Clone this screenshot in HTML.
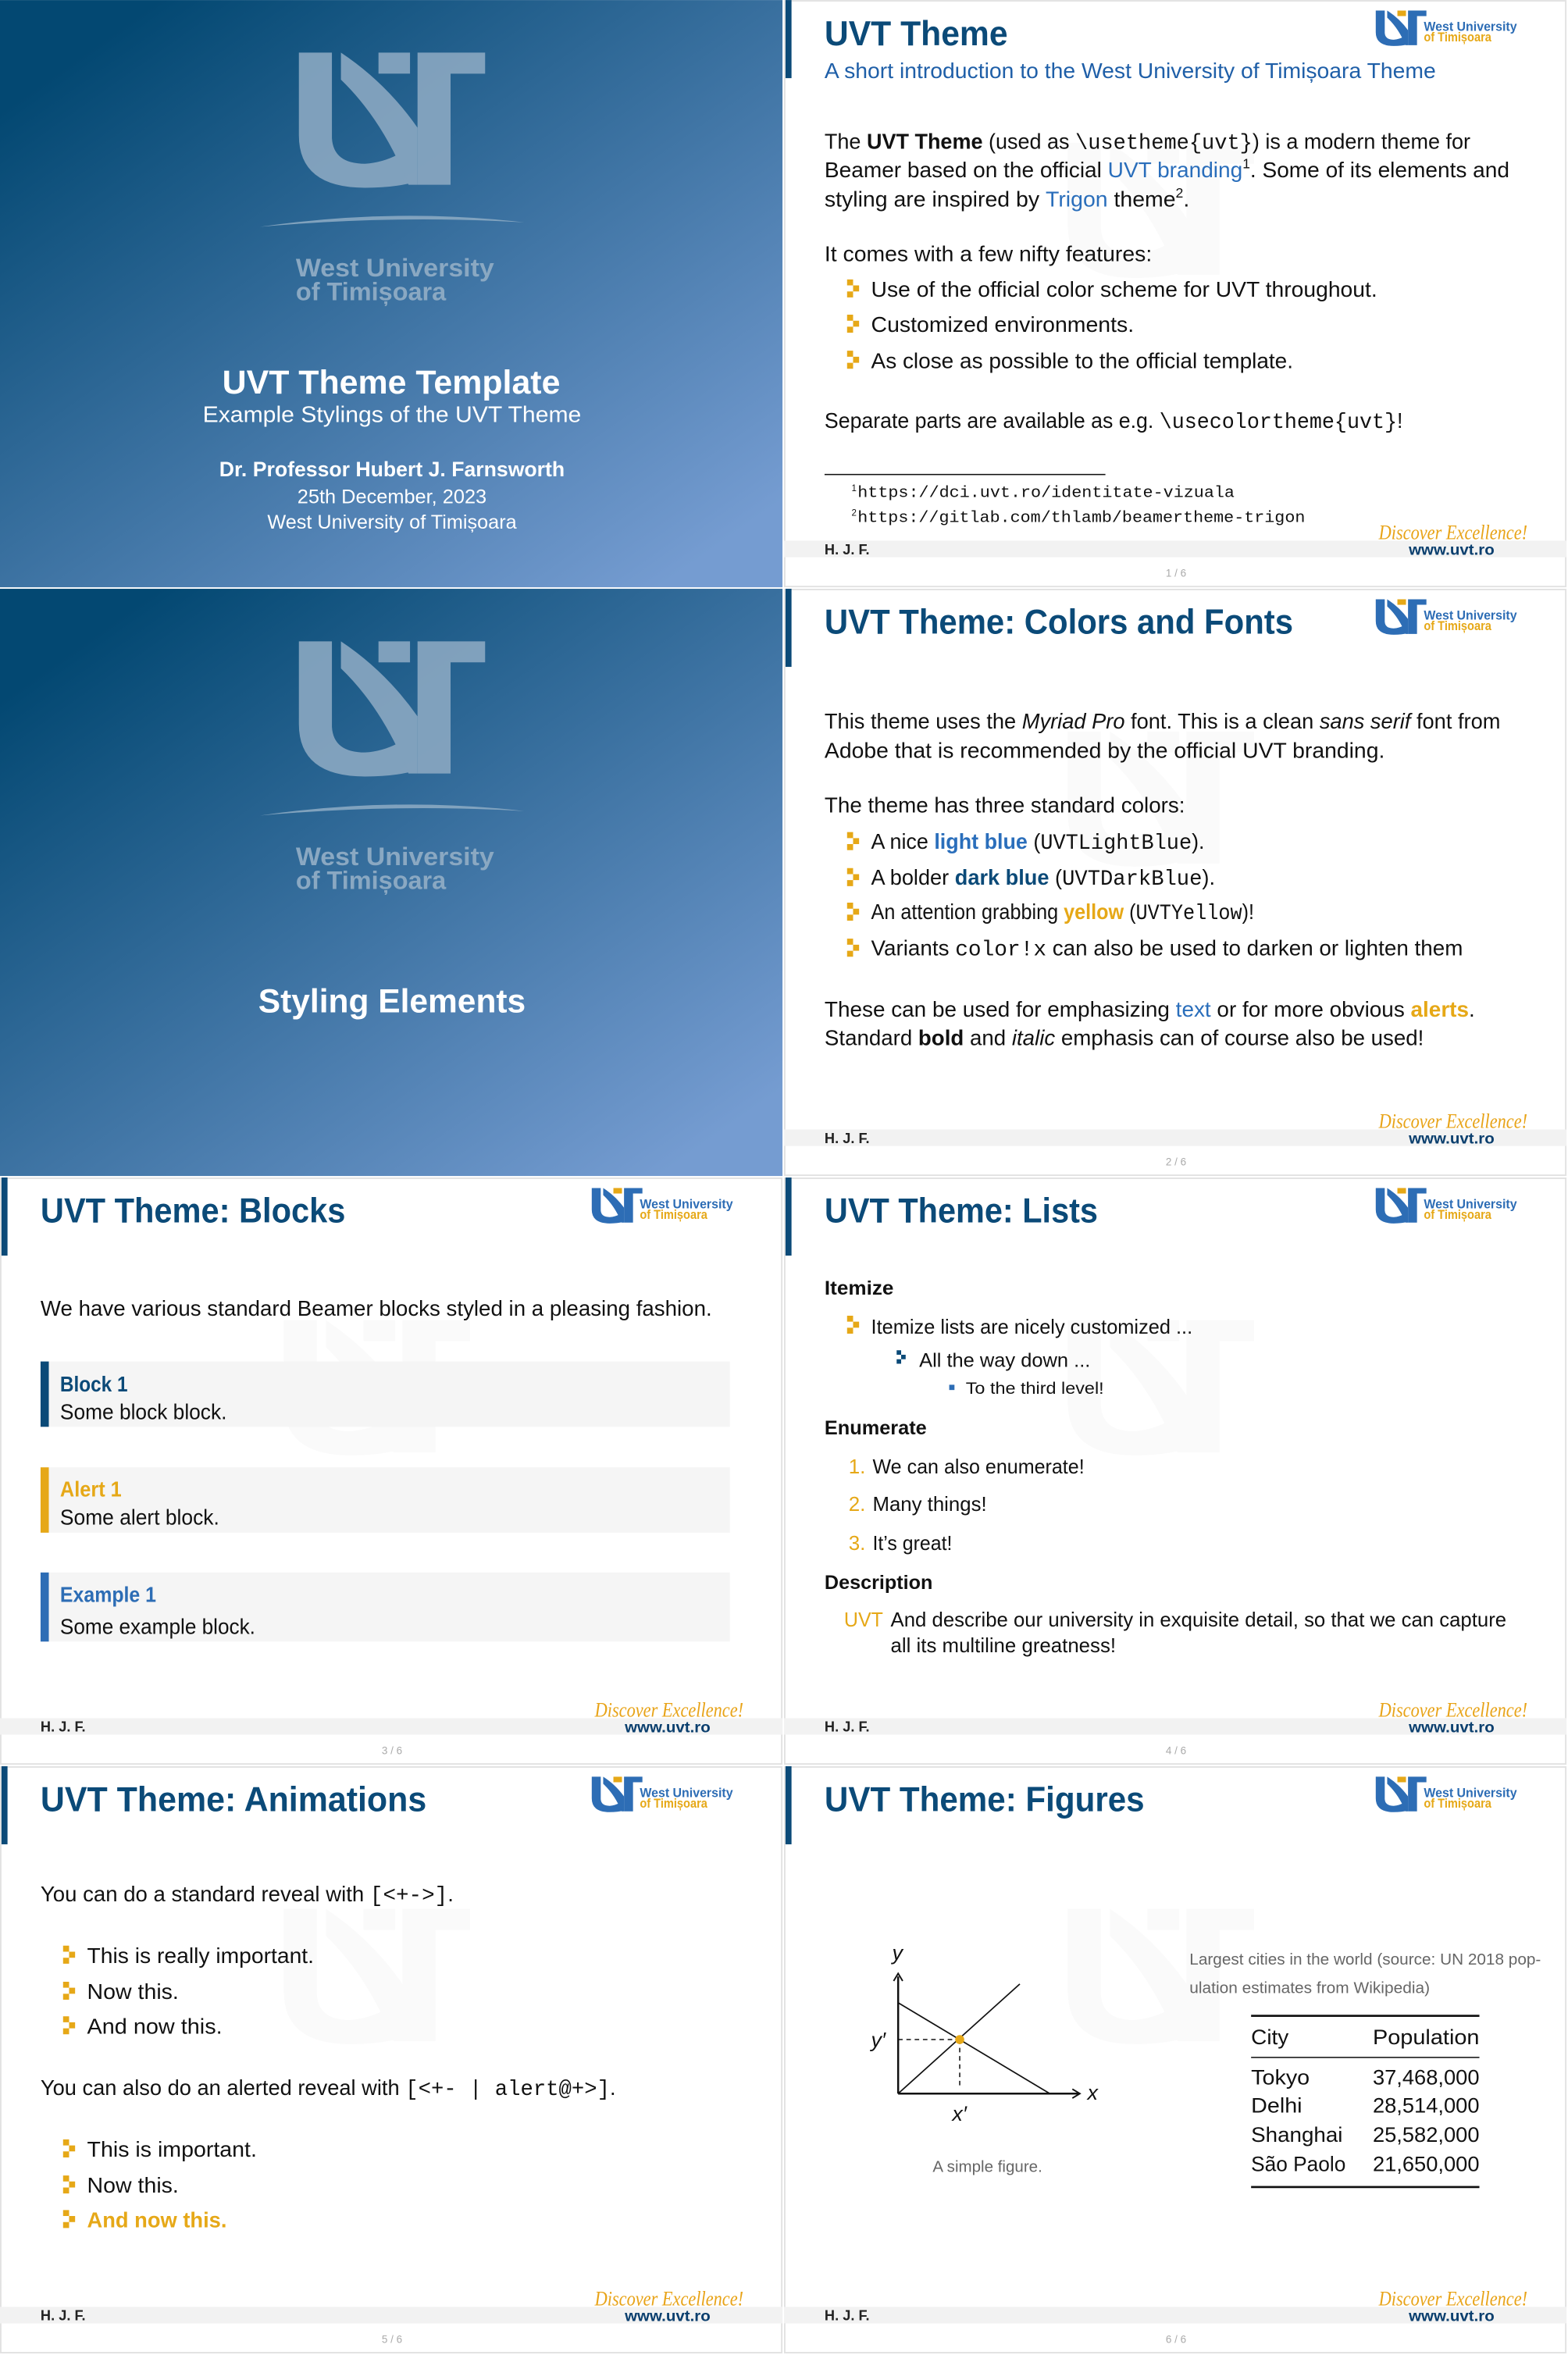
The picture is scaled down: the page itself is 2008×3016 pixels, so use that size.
<!DOCTYPE html>
<html><head><meta charset="utf-8">
<style>
html,body{margin:0;padding:0;background:#fff;}
svg{display:block;}
text{font-family:"Liberation Sans",sans-serif;fill:#111;}
.m{font-family:"Liberation Mono",monospace;}
.t{font-size:23px;font-weight:bold;fill:#0b4a78;}
.b{font-size:14.5px;}
.hjf{font-size:9.5px;font-weight:bold;fill:#222;}
.www{font-size:10px;font-weight:bold;fill:#0b3f6e;}
.disc{font-family:"Liberation Serif",serif;font-style:italic;font-size:14px;fill:#e8a317;}
.pg{font-size:7px;fill:#aaa;}
.lb{fill:#2a6ebb;}
.yl{fill:#e6a817;}
.db{fill:#0b4a78;}
</style></head>
<body>
<svg width="2008" height="3016" viewBox="0 0 1044 1568" xmlns="http://www.w3.org/2000/svg">
<defs>
<linearGradient id="gr" x1="0.15" y1="0.05" x2="0.95" y2="0.9">
<stop offset="0" stop-color="#034872"/>
<stop offset="1" stop-color="#759cd1"/>
</linearGradient>
<g id="lg">
<path d="M199,35H221V92Q222,109 243,109Q257,108 268,101L277,121Q263,125 243,125Q199,125 199,90Z"/>
<path d="M278,35H323V49H300V123H278Z"/>
<path d="M227,35Q257,55 278,85V123H272Q255,80 227,53Z"/>
</g>
<path id="bl" d="M0,0h4v4h-4z M4,4h4v4h-4z M0,8h4v4h-4z"/>
<g id="hdr">
<rect x="1" y="0" width="4" height="52" fill="#0b4a78"/>
<g transform="translate(394,7) scale(0.272,0.262) translate(-199,-35)" fill="#2d6db5"><use href="#lg"/><rect x="252" y="35" width="21" height="14" fill="#e6a817"/></g>
</g>
<g id="wm" fill="#fafafa">
<g transform="translate(-10,60)"><use href="#lg"/><rect x="252" y="35" width="21" height="14"/></g>
</g>
<g id="frame">
<rect x="0.5" y="0.5" width="520" height="390" fill="#fff" stroke="#e2e2e2"/>
</g>
<g id="tslide">
<rect x="0" y="0" width="521" height="391" fill="url(#gr)"/>
<g fill="#8aa8c2" opacity="0.9"><use href="#lg"/><rect x="252" y="35" width="21" height="14"/></g>
<path d="M173,151Q262,138 349,148Q262,143 173,151Z" fill="#8aa8c2" opacity="0.9"/>
</g>
</defs>

<!-- Slide 1 title -->
<g>
<use href="#tslide"/>
<text x="197" y="184" font-size="17" font-weight="bold" style="fill:#8aa8c2" textLength="132" lengthAdjust="spacingAndGlyphs">West University</text>
<text x="197" y="200" font-size="17" font-weight="bold" style="fill:#8aa8c2" textLength="100" lengthAdjust="spacingAndGlyphs">of Timișoara</text>
<text x="148" y="262" font-size="22" font-weight="bold" style="fill:#fff" textLength="225" lengthAdjust="spacingAndGlyphs">UVT Theme Template</text>
<text x="135" y="281" font-size="15" style="fill:#fff" textLength="252" lengthAdjust="spacingAndGlyphs">Example Stylings of the UVT Theme</text>
<text x="146" y="317" font-size="14" font-weight="bold" style="fill:#fff" textLength="230" lengthAdjust="spacingAndGlyphs">Dr. Professor Hubert J. Farnsworth</text>
<text x="198" y="335" font-size="13" style="fill:#fff" textLength="126" lengthAdjust="spacingAndGlyphs">25th December, 2023</text>
<text x="178" y="352" font-size="13" style="fill:#fff" textLength="166" lengthAdjust="spacingAndGlyphs">West University of Timișoara</text>
</g>

<!-- Slide 2: 1/6 -->
<g transform="translate(522,0)">
<use href="#frame"/><use href="#wm"/><use href="#hdr"/>
<text x="426" y="20.5" font-size="8.5" font-weight="bold" style="fill:#2d6db5" textLength="62" lengthAdjust="spacingAndGlyphs">West University</text>
<text x="426" y="27.5" font-size="8.5" font-weight="bold" style="fill:#e6a817" textLength="45" lengthAdjust="spacingAndGlyphs">of Timișoara</text>
<text class="t" x="27" y="30" textLength="122" lengthAdjust="spacingAndGlyphs">UVT Theme</text>
<text x="27" y="52" font-size="14.5" style="fill:#1f5fa8" textLength="407" lengthAdjust="spacingAndGlyphs">A short introduction to the West University of Timișoara Theme</text>
<text class="b" x="27" y="99" textLength="430" lengthAdjust="spacingAndGlyphs">The <tspan font-weight="bold">UVT Theme</tspan> (used as <tspan class="m">\usetheme{uvt}</tspan>) is a modern theme for</text>
<text class="b" x="27" y="118" textLength="456" lengthAdjust="spacingAndGlyphs">Beamer based on the official <tspan class="lb">UVT branding</tspan><tspan font-size="9" dy="-6">1</tspan><tspan dy="6">. Some of its elements and</tspan></text>
<text class="b" x="27" y="137.5" textLength="243" lengthAdjust="spacingAndGlyphs">styling are inspired by <tspan class="lb">Trigon</tspan> theme<tspan font-size="9" dy="-6">2</tspan><tspan dy="6">.</tspan></text>
<text class="b" x="27" y="174" textLength="218" lengthAdjust="spacingAndGlyphs">It comes with a few nifty features:</text>
<use href="#bl" x="42" y="186" fill="#e6a817"/>
<text class="b" x="58" y="197.5" textLength="337" lengthAdjust="spacingAndGlyphs">Use of the official color scheme for UVT throughout.</text>
<use href="#bl" x="42" y="209.5" fill="#e6a817"/>
<text class="b" x="58" y="221" textLength="175" lengthAdjust="spacingAndGlyphs">Customized environments.</text>
<use href="#bl" x="42" y="233.5" fill="#e6a817"/>
<text class="b" x="58" y="245" textLength="281" lengthAdjust="spacingAndGlyphs">As close as possible to the official template.</text>
<text class="b" x="27" y="285" textLength="385" lengthAdjust="spacingAndGlyphs">Separate parts are available as e.g. <tspan class="m">\usecolortheme{uvt}</tspan>!</text>
<rect x="27" y="315.5" width="187" height="0.8" fill="#111"/>
<text x="45" y="327" font-size="6">1</text>
<text class="m" x="49" y="331" font-size="10.5" textLength="251" lengthAdjust="spacingAndGlyphs">https://dci.uvt.ro/identitate-vizuala</text>
<text x="45" y="343.5" font-size="6">2</text>
<text class="m" x="49" y="347.5" font-size="10.5" textLength="298" lengthAdjust="spacingAndGlyphs">https://gitlab.com/thlamb/beamertheme-trigon</text>
<rect x="0" y="360" width="521" height="11" fill="#f2f2f2"/>
<text class="hjf" x="27" y="369" textLength="30" lengthAdjust="spacingAndGlyphs">H. J. F.</text>
<text class="disc" x="396" y="359" textLength="99" lengthAdjust="spacingAndGlyphs">Discover Excellence!</text>
<text class="www" x="416" y="369.5" textLength="57" lengthAdjust="spacingAndGlyphs">www.uvt.ro</text>
<text class="pg" x="261" y="384" text-anchor="middle">1 / 6</text>
</g>

<!-- Slide 3: Styling Elements -->
<g transform="translate(0,392)">
<use href="#tslide"/>
<text x="197" y="184" font-size="17" font-weight="bold" style="fill:#8aa8c2" textLength="132" lengthAdjust="spacingAndGlyphs">West University</text>
<text x="197" y="200" font-size="17" font-weight="bold" style="fill:#8aa8c2" textLength="100" lengthAdjust="spacingAndGlyphs">of Timișoara</text>
<text x="172" y="282" font-size="22" font-weight="bold" style="fill:#fff" textLength="178" lengthAdjust="spacingAndGlyphs">Styling Elements</text>
</g>

<!-- Slide 4: 2/6 -->
<g transform="translate(522,392)">
<use href="#frame"/><use href="#wm"/><use href="#hdr"/>
<text x="426" y="20.5" font-size="8.5" font-weight="bold" style="fill:#2d6db5" textLength="62" lengthAdjust="spacingAndGlyphs">West University</text>
<text x="426" y="27.5" font-size="8.5" font-weight="bold" style="fill:#e6a817" textLength="45" lengthAdjust="spacingAndGlyphs">of Timișoara</text>
<text class="t" x="27" y="30" textLength="312" lengthAdjust="spacingAndGlyphs">UVT Theme: Colors and Fonts</text>
<text class="b" x="27" y="93" textLength="450" lengthAdjust="spacingAndGlyphs">This theme uses the <tspan font-style="italic">Myriad Pro</tspan> font. This is a clean <tspan font-style="italic">sans serif</tspan> font from</text>
<text class="b" x="27" y="112.5" textLength="373" lengthAdjust="spacingAndGlyphs">Adobe that is recommended by the official UVT branding.</text>
<text class="b" x="27" y="149" textLength="240" lengthAdjust="spacingAndGlyphs">The theme has three standard colors:</text>
<use href="#bl" x="42" y="162" fill="#e6a817"/>
<text class="b" x="58" y="173" textLength="222" lengthAdjust="spacingAndGlyphs">A nice <tspan class="lb" font-weight="bold">light blue</tspan> (<tspan class="m">UVTLightBlue</tspan>).</text>
<use href="#bl" x="42" y="186" fill="#e6a817"/>
<text class="b" x="58" y="197" textLength="229" lengthAdjust="spacingAndGlyphs">A bolder <tspan class="db" font-weight="bold">dark blue</tspan> (<tspan class="m">UVTDarkBlue</tspan>).</text>
<use href="#bl" x="42" y="209" fill="#e6a817"/>
<text class="b" x="58" y="220" textLength="255" lengthAdjust="spacingAndGlyphs">An attention grabbing <tspan class="yl" font-weight="bold">yellow</tspan> (<tspan class="m">UVTYellow</tspan>)!</text>
<use href="#bl" x="42" y="233" fill="#e6a817"/>
<text class="b" x="58" y="244" textLength="394" lengthAdjust="spacingAndGlyphs">Variants <tspan class="m">color!x</tspan> can also be used to darken or lighten them</text>
<text class="b" x="27" y="285" textLength="433" lengthAdjust="spacingAndGlyphs">These can be used for emphasizing <tspan class="lb">text</tspan> or for more obvious <tspan class="yl" font-weight="bold">alerts</tspan>.</text>
<text class="b" x="27" y="304" textLength="399" lengthAdjust="spacingAndGlyphs">Standard <tspan font-weight="bold">bold</tspan> and <tspan font-style="italic">italic</tspan> emphasis can of course also be used!</text>
<rect x="0" y="360" width="521" height="11" fill="#f2f2f2"/>
<text class="hjf" x="27" y="369" textLength="30" lengthAdjust="spacingAndGlyphs">H. J. F.</text>
<text class="disc" x="396" y="359" textLength="99" lengthAdjust="spacingAndGlyphs">Discover Excellence!</text>
<text class="www" x="416" y="369.5" textLength="57" lengthAdjust="spacingAndGlyphs">www.uvt.ro</text>
<text class="pg" x="261" y="384" text-anchor="middle">2 / 6</text>
</g>

<!-- Slide 5: 3/6 Blocks -->
<g transform="translate(0,784)">
<use href="#frame"/><use href="#wm"/><use href="#hdr"/>
<text x="426" y="20.5" font-size="8.5" font-weight="bold" style="fill:#2d6db5" textLength="62" lengthAdjust="spacingAndGlyphs">West University</text>
<text x="426" y="27.5" font-size="8.5" font-weight="bold" style="fill:#e6a817" textLength="45" lengthAdjust="spacingAndGlyphs">of Timișoara</text>
<text class="t" x="27" y="30" textLength="203" lengthAdjust="spacingAndGlyphs">UVT Theme: Blocks</text>
<text class="b" x="27" y="92" textLength="447" lengthAdjust="spacingAndGlyphs">We have various standard Beamer blocks styled in a pleasing fashion.</text>
<rect x="27" y="122.5" width="459" height="43.5" fill="#f5f5f5"/><rect x="27" y="122.5" width="5.5" height="43.5" fill="#0b4a78"/>
<text class="b" x="40" y="142.5" font-weight="bold" style="fill:#0b4a78" textLength="45" lengthAdjust="spacingAndGlyphs">Block 1</text>
<text class="b" x="40" y="161" textLength="111" lengthAdjust="spacingAndGlyphs">Some block block.</text>
<rect x="27" y="193" width="459" height="43.5" fill="#f5f5f5"/><rect x="27" y="193" width="5.5" height="43.5" fill="#e6a817"/>
<text class="b" x="40" y="212.5" font-weight="bold" style="fill:#e6a817" textLength="41" lengthAdjust="spacingAndGlyphs">Alert 1</text>
<text class="b" x="40" y="231" textLength="106" lengthAdjust="spacingAndGlyphs">Some alert block.</text>
<rect x="27" y="263" width="459" height="46" fill="#f5f5f5"/><rect x="27" y="263" width="5.5" height="46" fill="#2d6db5"/>
<text class="b" x="40" y="282.5" font-weight="bold" style="fill:#2d6db5" textLength="64" lengthAdjust="spacingAndGlyphs">Example 1</text>
<text class="b" x="40" y="304" textLength="130" lengthAdjust="spacingAndGlyphs">Some example block.</text>
<rect x="0" y="360" width="521" height="11" fill="#f2f2f2"/>
<text class="hjf" x="27" y="369" textLength="30" lengthAdjust="spacingAndGlyphs">H. J. F.</text>
<text class="disc" x="396" y="359" textLength="99" lengthAdjust="spacingAndGlyphs">Discover Excellence!</text>
<text class="www" x="416" y="369.5" textLength="57" lengthAdjust="spacingAndGlyphs">www.uvt.ro</text>
<text class="pg" x="261" y="384" text-anchor="middle">3 / 6</text>
</g>

<!-- Slide 6: 4/6 Lists -->
<g transform="translate(522,784)">
<use href="#frame"/><use href="#wm"/><use href="#hdr"/>
<text x="426" y="20.5" font-size="8.5" font-weight="bold" style="fill:#2d6db5" textLength="62" lengthAdjust="spacingAndGlyphs">West University</text>
<text x="426" y="27.5" font-size="8.5" font-weight="bold" style="fill:#e6a817" textLength="45" lengthAdjust="spacingAndGlyphs">of Timișoara</text>
<text class="t" x="27" y="30" textLength="182" lengthAdjust="spacingAndGlyphs">UVT Theme: Lists</text>
<text x="27" y="78" font-size="13" font-weight="bold" textLength="46" lengthAdjust="spacingAndGlyphs">Itemize</text>
<use href="#bl" x="42" y="92" fill="#e6a817"/>
<text x="58" y="104" font-size="13.5" textLength="214" lengthAdjust="spacingAndGlyphs">Itemize lists are nicely customized ...</text>
<use href="#bl" x="75" y="115" fill="#0b4a78" transform="translate(75,115) scale(0.75) translate(-75,-115)"/>
<text x="90" y="126" font-size="13" textLength="114" lengthAdjust="spacingAndGlyphs">All the way down ...</text>
<rect x="110" y="138" width="3.5" height="3.5" fill="#2d6db5"/>
<text x="121" y="144" font-size="11" textLength="92" lengthAdjust="spacingAndGlyphs">To the third level!</text>
<text x="27" y="171" font-size="13" font-weight="bold" textLength="68" lengthAdjust="spacingAndGlyphs">Enumerate</text>
<text x="43" y="197" font-size="13.5" style="fill:#e6a817">1.</text>
<text x="59" y="197" font-size="13.5" textLength="141" lengthAdjust="spacingAndGlyphs">We can also enumerate!</text>
<text x="43" y="222" font-size="13.5" style="fill:#e6a817">2.</text>
<text x="59" y="222" font-size="13.5" textLength="76" lengthAdjust="spacingAndGlyphs">Many things!</text>
<text x="43" y="248" font-size="13.5" style="fill:#e6a817">3.</text>
<text x="59" y="248" font-size="13.5" textLength="53" lengthAdjust="spacingAndGlyphs">It’s great!</text>
<text x="27" y="274" font-size="13" font-weight="bold" textLength="72" lengthAdjust="spacingAndGlyphs">Description</text>
<text x="40" y="299" font-size="13.5" style="fill:#e6a817" textLength="26" lengthAdjust="spacingAndGlyphs">UVT</text>
<text x="71" y="299" font-size="13.5" textLength="410" lengthAdjust="spacingAndGlyphs">And describe our university in exquisite detail, so that we can capture</text>
<text x="71" y="316" font-size="13.5" textLength="150" lengthAdjust="spacingAndGlyphs">all its multiline greatness!</text>
<rect x="0" y="360" width="521" height="11" fill="#f2f2f2"/>
<text class="hjf" x="27" y="369" textLength="30" lengthAdjust="spacingAndGlyphs">H. J. F.</text>
<text class="disc" x="396" y="359" textLength="99" lengthAdjust="spacingAndGlyphs">Discover Excellence!</text>
<text class="www" x="416" y="369.5" textLength="57" lengthAdjust="spacingAndGlyphs">www.uvt.ro</text>
<text class="pg" x="261" y="384" text-anchor="middle">4 / 6</text>
</g>

<!-- Slide 7: 5/6 Animations -->
<g transform="translate(0,1176)">
<use href="#frame"/><use href="#wm"/><use href="#hdr"/>
<text x="426" y="20.5" font-size="8.5" font-weight="bold" style="fill:#2d6db5" textLength="62" lengthAdjust="spacingAndGlyphs">West University</text>
<text x="426" y="27.5" font-size="8.5" font-weight="bold" style="fill:#e6a817" textLength="45" lengthAdjust="spacingAndGlyphs">of Timișoara</text>
<text class="t" x="27" y="30" textLength="257" lengthAdjust="spacingAndGlyphs">UVT Theme: Animations</text>
<text class="b" x="27" y="90" textLength="275" lengthAdjust="spacingAndGlyphs">You can do a standard reveal with <tspan class="m">[&lt;+-&gt;]</tspan>.</text>
<use href="#bl" x="42" y="119.5" fill="#e6a817"/>
<text class="b" x="58" y="131" textLength="151" lengthAdjust="spacingAndGlyphs">This is really important.</text>
<use href="#bl" x="42" y="143.5" fill="#e6a817"/>
<text class="b" x="58" y="155" textLength="61" lengthAdjust="spacingAndGlyphs">Now this.</text>
<use href="#bl" x="42" y="166.5" fill="#e6a817"/>
<text class="b" x="58" y="178" textLength="90" lengthAdjust="spacingAndGlyphs">And now this.</text>
<text class="b" x="27" y="219" textLength="383" lengthAdjust="spacingAndGlyphs">You can also do an alerted reveal with <tspan class="m">[&lt;+- | alert@+&gt;]</tspan>.</text>
<use href="#bl" x="42" y="248.5" fill="#e6a817"/>
<text class="b" x="58" y="260" textLength="113" lengthAdjust="spacingAndGlyphs">This is important.</text>
<use href="#bl" x="42" y="272.5" fill="#e6a817"/>
<text class="b" x="58" y="284" textLength="61" lengthAdjust="spacingAndGlyphs">Now this.</text>
<use href="#bl" x="42" y="295.5" fill="#e6a817"/>
<text class="b" x="58" y="307" font-weight="bold" style="fill:#e6a817" textLength="93" lengthAdjust="spacingAndGlyphs">And now this.</text>
<rect x="0" y="360" width="521" height="11" fill="#f2f2f2"/>
<text class="hjf" x="27" y="369" textLength="30" lengthAdjust="spacingAndGlyphs">H. J. F.</text>
<text class="disc" x="396" y="359" textLength="99" lengthAdjust="spacingAndGlyphs">Discover Excellence!</text>
<text class="www" x="416" y="369.5" textLength="57" lengthAdjust="spacingAndGlyphs">www.uvt.ro</text>
<text class="pg" x="261" y="384" text-anchor="middle">5 / 6</text>
</g>

<!-- Slide 8: 6/6 Figures -->
<g transform="translate(522,1176)">
<use href="#frame"/><use href="#wm"/><use href="#hdr"/>
<text x="426" y="20.5" font-size="8.5" font-weight="bold" style="fill:#2d6db5" textLength="62" lengthAdjust="spacingAndGlyphs">West University</text>
<text x="426" y="27.5" font-size="8.5" font-weight="bold" style="fill:#e6a817" textLength="45" lengthAdjust="spacingAndGlyphs">of Timișoara</text>
<text class="t" x="27" y="30" textLength="213" lengthAdjust="spacingAndGlyphs">UVT Theme: Figures</text>
<g stroke="#111" fill="none" stroke-width="1.3">
<line x1="76" y1="218" x2="76" y2="140"/>
<line x1="76" y1="218" x2="196" y2="218"/>
<path d="M73,143 L76,138 L79,143" stroke-width="1"/>
<path d="M192,215 L197,218 L192,221" stroke-width="1"/>
<line x1="76" y1="157.5" x2="177" y2="218" stroke-width="0.9"/>
<line x1="76" y1="218" x2="157" y2="145" stroke-width="0.9"/>
<line x1="76" y1="182" x2="117" y2="182" stroke-width="0.8" stroke-dasharray="3,2.5"/>
<line x1="117" y1="182" x2="117" y2="214" stroke-width="0.8" stroke-dasharray="3,2.5"/>
</g>
<circle cx="117" cy="182" r="3" fill="#e6a817"/>
<text x="72" y="129" font-size="14" font-style="italic">y</text>
<text x="58" y="187" font-size="14" font-style="italic">y′</text>
<text x="112" y="236" font-size="14" font-style="italic">x′</text>
<text x="202" y="222" font-size="14" font-style="italic">x</text>
<text x="99" y="270" font-size="10.5" style="fill:#666" textLength="73" lengthAdjust="spacingAndGlyphs">A simple figure.</text>
<text x="270" y="132" font-size="10.5" style="fill:#666" textLength="234" lengthAdjust="spacingAndGlyphs">Largest cities in the world (source: UN 2018 pop-</text>
<text x="270" y="151" font-size="10.5" style="fill:#666" textLength="160" lengthAdjust="spacingAndGlyphs">ulation estimates from Wikipedia)</text>
<rect x="311" y="165.5" width="152" height="1.4" fill="#111"/>
<text x="311" y="185" font-size="14" textLength="25" lengthAdjust="spacingAndGlyphs">City</text>
<text x="392" y="185" font-size="14" textLength="71" lengthAdjust="spacingAndGlyphs">Population</text>
<rect x="311" y="193.5" width="152" height="0.8" fill="#111"/>
<text x="311" y="212" font-size="14" textLength="39" lengthAdjust="spacingAndGlyphs">Tokyo</text>
<text x="392" y="212" font-size="14" textLength="71" lengthAdjust="spacingAndGlyphs">37,468,000</text>
<text x="311" y="230.5" font-size="14" textLength="34" lengthAdjust="spacingAndGlyphs">Delhi</text>
<text x="392" y="230.5" font-size="14" textLength="71" lengthAdjust="spacingAndGlyphs">28,514,000</text>
<text x="311" y="250" font-size="14" textLength="61" lengthAdjust="spacingAndGlyphs">Shanghai</text>
<text x="392" y="250" font-size="14" textLength="71" lengthAdjust="spacingAndGlyphs">25,582,000</text>
<text x="311" y="269.5" font-size="14" textLength="63" lengthAdjust="spacingAndGlyphs">São Paolo</text>
<text x="392" y="269.5" font-size="14" textLength="71" lengthAdjust="spacingAndGlyphs">21,650,000</text>
<rect x="311" y="279.5" width="152" height="1.4" fill="#111"/>
<rect x="0" y="360" width="521" height="11" fill="#f2f2f2"/>
<text class="hjf" x="27" y="369" textLength="30" lengthAdjust="spacingAndGlyphs">H. J. F.</text>
<text class="disc" x="396" y="359" textLength="99" lengthAdjust="spacingAndGlyphs">Discover Excellence!</text>
<text class="www" x="416" y="369.5" textLength="57" lengthAdjust="spacingAndGlyphs">www.uvt.ro</text>
<text class="pg" x="261" y="384" text-anchor="middle">6 / 6</text>
</g>
</svg>
</body></html>
